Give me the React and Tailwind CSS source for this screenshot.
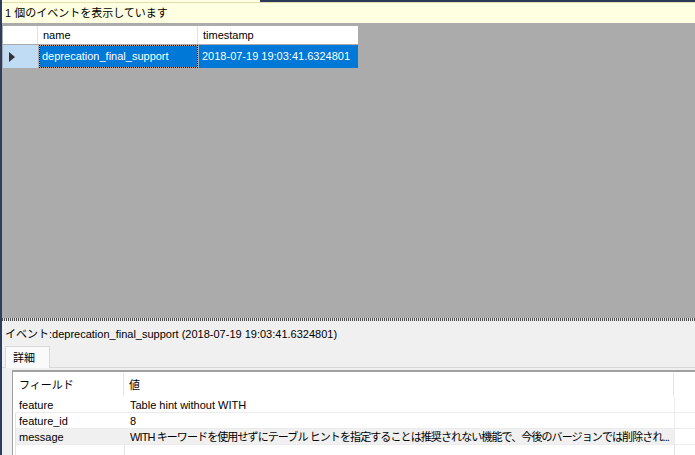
import React from "react";

const FONT = { fontFamily: '"Liberation Sans", "Noto Sans CJK JP", sans-serif' };

export default function App() {
  return (
    <div
      className="w-[695px] h-[455px] flex flex-col overflow-hidden border-l-2 border-[#2d3d5f] text-[11px] leading-none text-black bg-[#f0f0f0]"
      style={FONT}
    >
      {/* top strip */}
      <div className="flex h-[2px] flex-none">
        <div className="w-[258px] bg-[#ffffe1]" />
        <div className="flex-1 bg-[#2b3a58]" />
      </div>
      <div className="h-[1px] flex-none bg-[#e3dcae]" />
      <div className="h-[20px] flex-none bg-[#ffffe1] flex items-center pl-[3px] pt-[1px]">
        1 個のイベントを表示しています
      </div>

      {/* grid area */}
      <div className="flex-1 bg-[#ababab] pt-[3px] pl-[1px]">
        <div className="w-[355px] flex flex-col gap-px">
          <div className="flex h-[18px] bg-white">
            <div className="w-[35px] border-r border-[#e3e3e3]" />
            <div className="w-[160px] border-r border-[#e3e3e3] flex items-center pl-[5px]">name</div>
            <div className="w-[160px] flex items-center pl-[5px]">timestamp</div>
          </div>
          <div className="flex h-[23px] gap-px">
            <div className="w-[35px] bg-[#bfdcf4] flex items-center pl-[6px]">
              <div className="w-0 h-0 border-y-[5px] border-y-transparent border-l-[6px] border-l-[#333]" />
            </div>
            <div className="w-[159px] bg-[#e8a040]">
              <div className="h-full border border-dotted border-black bg-[#0078d7] bg-clip-padding text-white flex items-center pl-[2px]">
                deprecation_final_support
              </div>
            </div>
            <div className="w-[159px] bg-[#0078d7] text-white flex items-center pl-[3px]">
              2018-07-19 19:03:41.6324801
            </div>
          </div>
        </div>
      </div>

      {/* splitter */}
      <div className="h-[3px] flex-none bg-[repeating-linear-gradient(90deg,#4a4a4a_0_1px,#e8e8e8_1px_2px)]" />

      {/* bottom panel */}
      <div className="h-[134px] flex-none flex flex-col bg-[#f0f0f0] overflow-hidden">
        <div className="h-[24px] flex-none flex items-center pl-[3px] pt-[2px]">
          イベント:deprecation_final_support (2018-07-19 19:03:41.6324801)
        </div>
        <div className="mt-[1px] h-[22px] flex-none flex items-end border-b border-[#d9d9d9]">
          <div className="ml-[3px] w-[45px] h-[22px] -mb-px bg-[#fafafa] border border-b-0 border-[#d9d9d9] flex items-center pl-[7px] pt-[1px]">
            詳細
          </div>
        </div>
        <div className="flex-1 pt-[2px] pl-[10px]">
          <div className="h-[90px] bg-white border-l border-t-2 border-[#a0a0a0] flex flex-col">
            {/* header */}
            <div className="flex h-[25px] flex-none">
              <div className="w-[111px] flex items-center pl-[6px] pt-[1px] border-r border-[#e3e3e3] my-[1px]">フィールド</div>
              <div className="w-[550px] flex items-center pl-[5px] pt-[1px] border-r border-[#e3e3e3] my-[1px]">値</div>
              <div className="flex-1" />
            </div>
            <Row field="feature" value="Table hint without WITH" noMark />
            <Row field="feature_id" value="8" />
            <Row
              field="message"
              value="WITH キーワードを使用せずにテーブル ヒントを指定することは推奨されない機能で、今後のバージョンでは削除され..."
              gray
              tight
            />
            <div className="flex h-[16px] flex-none">
              <div className="w-[3px] border-r border-[#e3e3e3]" />
              <div className="w-[109px] border-r border-[#e3e3e3]" />
              <div className="w-[550px] border-r border-[#e3e3e3]" />
              <div className="flex-1" />
            </div>
          </div>
        </div>
      </div>
    </div>
  );
}

function Row({ field, value, gray, noMark, tight }) {
  return (
    <div className="flex h-[16px] flex-none">
      <div className={"w-[3px] " + (noMark ? "" : "border-r border-[#e3e3e3]")} />
      <div className={"w-[658px] flex border-b border-[#ececec] " + (gray ? "bg-[#f0f0f0]" : "")}>
        <div className="w-[109px] flex items-center pl-[3px] pt-[1px]">{field}</div>
        <div className="flex-1 flex items-center pl-[5px] pt-[1px] overflow-hidden whitespace-nowrap">
          <span className={tight ? "tracking-[-0.9px]" : ""}>{value}</span>
        </div>
      </div>
      <div className="flex-1 border-l border-b border-[#ececec]" />
    </div>
  );
}
